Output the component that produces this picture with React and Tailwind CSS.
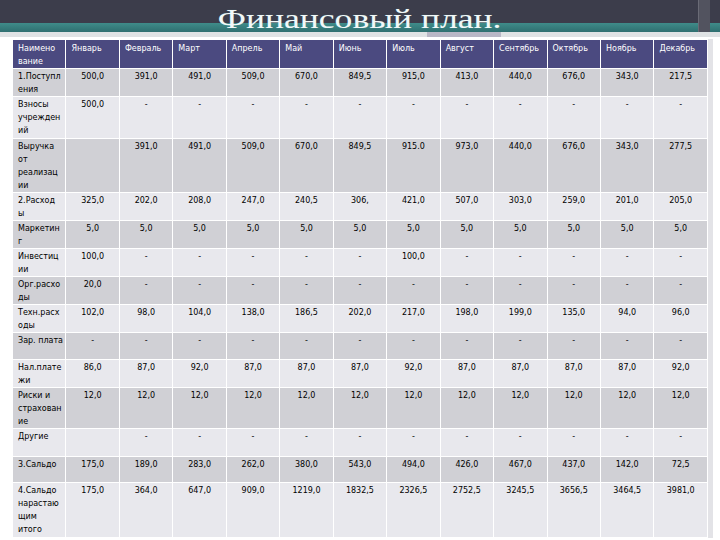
import React from "react";

const months = ["Январь","Февраль","Март","Апрель","Май","Июнь","Июль","Август","Сентябрь","Октябрь","Ноябрь","Декабрь"];
const d = "-";
const rows = [
  { label: ["1.Поступл","ения"], h: 28, v: ["500,0","391,0","491,0","509,0","670,0","849,5","915,0","413,0","440,0","676,0","343,0","217,5"] },
  { label: ["Взносы","учрежден","ий"], h: 43, v: ["500,0",d,d,d,d,d,d,d,d,d,d,d] },
  { label: ["Выручка","от","реализац","ии"], h: 54, v: ["","391,0","491,0","509,0","670,0","849,5","915.0","973,0","440,0","676,0","343,0","277,5"] },
  { label: ["2.Расход","ы"], h: 28, v: ["325,0","202,0","208,0","247,0","240,5","306,","421,0","507,0","303,0","259,0","201,0","205,0"] },
  { label: ["Маркетин","г"], h: 28, v: Array(12).fill("5,0") },
  { label: ["Инвестиц","ии"], h: 28, v: ["100,0",d,d,d,d,d,"100,0",d,d,d,d,d] },
  { label: ["Орг.расхо","ды"], h: 27, v: ["20,0",d,d,d,d,d,d,d,d,d,d,d] },
  { label: ["Техн.расх","оды"], h: 29, v: ["102,0","98,0","104,0","138,0","186,5","202,0","217,0","198,0","199,0","135,0","94,0","96,0"] },
  { label: ["Зар. плата"], h: 28, v: Array(12).fill(d) },
  { label: ["Нал.плате","жи"], h: 28, v: ["86,0","87,0","92,0","87,0","87,0","87,0","92,0","87,0","87,0","87,0","87,0","92,0"] },
  { label: ["Риски и","страхован","ие"], h: 41, v: Array(12).fill("12,0") },
  { label: ["Другие"], h: 29, v: ["",d,d,d,d,d,d,d,d,d,d,d] },
  { label: ["3.Сальдо"], h: 27, v: ["175,0","189,0","283,0","262,0","380,0","543,0","494,0","426,0","467,0","437,0","142,0","72,5"] },
  { label: ["4.Сальдо","нарастаю","щим","итого"], h: 56, v: ["175,0","364,0","647,0","909,0","1219,0","1832,5","2326,5","2752,5","3245,5","3656,5","3464,5","3981,0"] },
];

function Lines({ lines }) {
  return lines.map((l, i) => (
    <div key={i} className="whitespace-nowrap">{l}</div>
  ));
}

export default function App() {
  return (
    <div className="w-[720px] h-[540px] overflow-hidden bg-white relative" style={{ fontFamily: "'DejaVu Sans', Verdana, sans-serif" }}>
      {/* Title band */}
      <div className="relative h-[37px]">
        <div className="h-[23px] bg-[#3c3d4b]" />
        <div className="h-[9px] bg-gradient-to-b from-[#3f8c8a] to-[#2f6f70]" />
        <div className="h-[5px] bg-[#dfe2e4]" />
        <div className="absolute right-[10px] top-0 w-[12px] h-[32px] bg-[#52535f] border-l border-[#6a6b76]" />
        <div className="absolute left-[427px] top-[32px] w-[74px] h-[5px] bg-[#b9b7c6]" />
        <div className="absolute inset-x-0 top-[5px] flex justify-center">
          <div className="text-[#f2f8f8] text-[28px] leading-[28px] whitespace-nowrap scale-x-[1.27] origin-center" style={{ fontFamily: "'Liberation Serif', 'Times New Roman', serif", textShadow: "0 0 1px rgba(90,170,170,0.5)" }}>
            Финансовый план.
          </div>
        </div>
      </div>

      {/* Table */}
      <div className="pl-[12px] pt-[2px]">
        <table className="table-fixed w-[696px] border-collapse text-[8px] leading-[13px] text-black shadow-[5px_0_0_#e3e3e7]">
          <tbody>
            <tr style={{ height: 26 }} className="bg-[#4b4a80] text-white align-top">
              <td className="border border-white pl-[5px] pt-[2px]"><Lines lines={["Наимено","вание"]} /></td>
              {months.map((m) => (
                <td key={m} className="border border-white pl-[5px] pt-[2px] whitespace-nowrap">{m}</td>
              ))}
            </tr>
            {rows.map((r, ri) => (
              <tr key={ri} style={{ height: r.h - 1 }} className={`align-top ${ri % 2 === 0 ? "bg-[#d0d0d5]" : "bg-[#e8e8ed]"}`}>
                <td className="border border-white pl-[5px] pt-[1px]"><Lines lines={r.label} /></td>
                {r.v.map((v, ci) => (
                  <td key={ci} className="border border-white text-center pt-[1px] whitespace-nowrap">{v}</td>
                ))}
              </tr>
            ))}
          </tbody>
        </table>
      </div>
    </div>
  );
}
